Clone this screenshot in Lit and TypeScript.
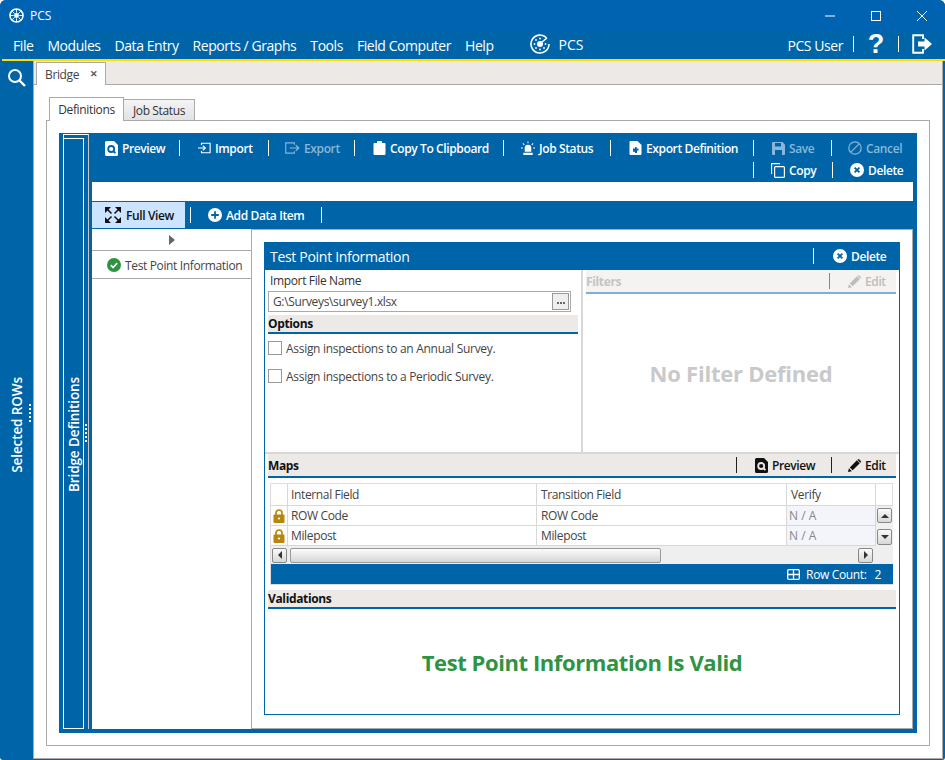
import { LitElement, html, css, svg } from "lit";
import { customElement } from "lit/decorators.js";

const ico = (w: number, h: number, vb: string, body: unknown) =>
  html`<svg class="ico" width=${w} height=${h} viewBox=${vb}>${body}</svg>`;

const I = {
  preview: () => ico(13, 15, "0 0 13 15", svg`<path d="M1.500 0H9l4 4v9.500a1.500 1.500 0 0 1-1.500 1.500h-10A1.500 1.500 0 0 1 0 13.500v-12A1.500 1.500 0 0 1 1.500 0z" fill="currentColor"/><circle cx="6.200" cy="8" r="3" fill="none" stroke="var(--hole)" stroke-width="1.800"/><path d="M8.200 10l2.200 2.200" stroke="var(--hole)" stroke-width="1.800"/>`),
  imp: () => ico(13, 14, "0 0 15 14", svg`<path d="M4 3.500V1.500h10v11H4v-2" fill="none" stroke="currentColor" stroke-width="1.300"/><path d="M0 7h8M5.500 4.300L8.500 7l-3 2.700" fill="none" stroke="currentColor" stroke-width="1.400"/>`),
  exp: () => ico(15, 14, "0 0 16 14", svg`<path d="M10 3.500V1.500H.8v11H10v-2" fill="none" stroke="currentColor" stroke-width="1.200"/><path d="M5 7h9M11.500 4l3.200 3-3.200 3" fill="none" stroke="currentColor" stroke-width="1.300"/>`),
  clip: () => ico(13, 14, "0 0 12 14", svg`<path d="M1 2h2.500V.8C3.500.3 4 0 4.500 0h3c.5 0 1 .3 1 .8V2H11a1 1 0 0 1 1 1v10a1 1 0 0 1-1 1H1a1 1 0 0 1-1-1V3a1 1 0 0 1 1-1z" fill="currentColor"/>`),
  beacon: () => ico(14, 15, "0 0 15 15", svg`<path d="M4 11V7a3.500 3.500 0 0 1 7 0v4zM2.500 12h10v2.500h-10z" fill="currentColor"/><path d="M7.500 0v2M2 2l1.500 1.500M13 2l-1.500 1.500M0 7h2M13 7h2" stroke="currentColor" stroke-width="1.100"/>`),
  expdef: () => ico(13, 14, "0 0 12 14", svg`<path d="M1 0h7l4 4v9a1 1 0 0 1-1 1H1a1 1 0 0 1-1-1V1a1 1 0 0 1 1-1z" fill="currentColor"/><path d="M3.500 7.500h2V6h1.600v1.500H9v2H7.500V12h-2v-1.200h-2z" fill="#0065a8"/>`),
  save: () => ico(13, 13, "0 0 13 13", svg`<path d="M1 0h9.500L13 2.500V12a1 1 0 0 1-1 1H1a1 1 0 0 1-1-1V1a1 1 0 0 1 1-1z" fill="currentColor"/><path d="M3 1h6v3.500H3zM3 8h7v5H3z" fill="#0065a8"/>`),
  cancel: () => ico(14, 14, "0 0 14 14", svg`<circle cx="7" cy="7" r="6.200" fill="none" stroke="currentColor" stroke-width="1.200"/><path d="M2.800 11.200l8.400-8.400" stroke="currentColor" stroke-width="1.200"/>`),
  copy: () => ico(14, 15, "0 0 14 15", svg`<path d="M.6 11V.6H9" fill="none" stroke="currentColor" stroke-width="1.100"/><rect x="3.600" y="3.600" width="9.800" height="10.800" rx="1" fill="none" stroke="currentColor" stroke-width="1.200"/>`),
  del: () => ico(14, 14, "0 0 14 14", svg`<circle cx="7" cy="7" r="7" fill="currentColor"/><path d="M4.600 4.600l4.800 4.800M9.400 4.600l-4.800 4.800" stroke="#0065a8" stroke-width="1.800"/>`),
  full: () => ico(16, 16, "0 0 16 16", svg`<g fill="#111"><path d="M0 0h6L0 6zM16 0h-6l6 6zM0 16h6l-6-6zM16 16h-6l6-6z"/></g><path d="M2 2l4.500 4.500M14 2L9.500 6.500M2 14l4.500-4.500M14 14L9.500 9.500" stroke="#111" stroke-width="1.500"/>`),
  add: () => ico(14, 14, "0 0 14 14", svg`<circle cx="7" cy="7" r="7" fill="currentColor"/><path d="M7 3.200v7.600M3.200 7h7.600" stroke="#0065a8" stroke-width="1.800"/>`),
  check: () => ico(14, 14, "0 0 14 14", svg`<circle cx="7" cy="7" r="7" fill="#2e9443"/><path d="M3.800 7.200l2.300 2.300 4.100-4.300" fill="none" stroke="#fff" stroke-width="1.700"/>`),
  pencil: () => ico(13, 13, "0 0 13 13", svg`<path d="M0 13l.9-3.700 3 2.900zM1.800 8.400L8.900 1.300l2.900 2.900-7.100 7.100zM9.700.5c.5-.5 1.200-.5 1.700 0l1.200 1.200c.5.5.5 1.200 0 1.700l-.3.3-2.900-2.900z" fill="currentColor"/>`),
  lock: () => ico(12, 14, "0 0 12 14", svg`<path d="M3 6V4a3 3 0 0 1 6 0v2" fill="none" stroke="#b8860b" stroke-width="1.700"/><rect x=".5" y="5.500" width="11" height="8.500" rx="1" fill="#b8860b"/><circle cx="6" cy="9.500" r="1.100" fill="#fff"/>`),
  grid: () => ico(13, 11, "0 0 13 11", svg`<rect x=".7" y=".7" width="11.600" height="9.600" rx="1" fill="none" stroke="currentColor" stroke-width="1.300"/><path d="M.7 5.500h11.600M6.500.7v9.600" stroke="currentColor" stroke-width="1.300"/>`),
};

type Btn = { icon: () => unknown; label: string; w: number; m?: number; off?: boolean; sep?: boolean };

const row1: Btn[] = [
  { icon: I.preview, label: "Preview", w: 74, m: 18 },
  { icon: I.imp, label: "Import", w: 70, m: 16 },
  { icon: I.exp, label: "Export", w: 69, m: 18, off: true },
  { icon: I.clip, label: "Copy To Clipboard", w: 130, m: 17 },
  { icon: I.beacon, label: "Job Status", w: 89, m: 18 },
  { icon: I.expdef, label: "Export Definition", w: 124, m: 18 },
  { icon: I.save, label: "Save", w: 59, m: 16, off: true },
  { icon: I.cancel, label: "Cancel", w: 60, off: true, sep: false },
];

const rows = [
  { field: "ROW Code", trans: "ROW Code" },
  { field: "Milepost", trans: "Milepost" },
];

@customElement("app-root")
export class AppRoot extends LitElement {
  static styles = css`
    :host {
      display: block;
      width: 945px;
      height: 760px;
      overflow: hidden;
      background: #fff;
      font-family: "Open Sans", "Noto Sans", sans-serif;
      font-size: 12px;
      letter-spacing: -0.36px;
      color: #333;
      --blue: #0065a8;
      --hole: #0065a8;
    }
    * { box-sizing: border-box; }
    .ico { display: block; flex: none; }
    .win {
      height: 760px;
      border-radius: 6px 6px 3px 3px;
      overflow: hidden;
      background: var(--blue);
      display: flex;
      flex-direction: column;
    }
    .title {
      height: 31px;
      background: #0063b1;
      color: #fff;
      display: flex;
      align-items: center;
      padding-left: 9px;
      flex: none;
    }
    .title .name { margin-left: 6px; letter-spacing: 0; }
    .winctl { margin-left: auto; display: flex; align-items: center; }
    .winctl svg { display: block; }
    .winctl .c { width: 46px; display: flex; justify-content: center; }
    .menu {
      height: 30px;
      flex: none;
      border-bottom: 2px solid #ffdd00;
      margin-left: 2px;
      color: #fff;
      font-size: 14px;
      letter-spacing: -0.44px;
      display: flex;
      align-items: center;
      padding-left: 11px;
    }
    .menu .m { margin-right: 14px; white-space: nowrap; }
    .brand { display: flex; align-items: center; gap: 9px; margin-left: 22px; font-size: 14px; margin-top: -2px; }
    .brand span { letter-spacing: 0; }
    .user { margin-left: auto; display: flex; align-items: center; padding-right: 13px; }
    .user .vs { width: 1px; height: 16px; background: #fff; }
    .user .vs, .user .q, .user svg { margin-top: -2px; }
    .q { font: 700 27px "Liberation Sans", sans-serif; width: 44px; text-align: center; letter-spacing: 0; line-height: 26px; }
    .body { flex: 1; display: flex; min-height: 0; }
    .side {
      width: 33px;
      flex: none;
      position: relative;
      color: #fff;
      display: flex;
      flex-direction: column;
      align-items: center;
      padding-top: 7px;
    }
    .vtext {
      writing-mode: vertical-rl;
      transform: rotate(180deg);
      white-space: nowrap;
      font-size: 13.500px;
      font-weight: 600;
      letter-spacing: -0.1px;
      color: #fff;
    }
    .side .vtext { margin-top: 289px; }
    .grip {
      position: absolute;
      width: 2px;
      background: repeating-linear-gradient(#fff 0 2px, transparent 2px 4px);
    }
    .side .grip { left: 29px; top: 343px; height: 18px; }
    .main {
      flex: 1;
      min-width: 0;
      margin: 0 2px 1px 0;
      background: #fff;
      border: 1px solid #aaa;
      border-top: 0;
      display: flex;
      flex-direction: column;
    }
    .docstrip {
      height: 24px;
      flex: none;
      background: #ece9e7;
      border-bottom: 1px solid #aaa;
      padding: 1px 0 0 2px;
    }
    .doctab {
      width: 70px;
      height: 23px;
      background: #fff;
      border: 1px solid #aaa;
      border-bottom: 0;
      display: flex;
      align-items: center;
      padding-left: 8px;
      color: #444;
    }
    .doctab b { margin-left: auto; margin-right: 7px; font-weight: 700; font-size: 9px; line-height: 12px; color: #555; }
    .pane { flex: 1; min-height: 0; padding: 12px; display: flex; flex-direction: column; }
    .tabs { display: flex; height: 24px; padding-left: 3px; align-items: flex-end; margin-bottom: -1px; position: relative; }
    .tab {
      width: 75px;
      height: 24px;
      background: #fff;
      border: 1px solid #aaa;
      border-bottom: 0;
      display: flex;
      align-items: center;
      justify-content: center;
      position: relative;
      z-index: 1;
    }
    .tab.off {
      width: 71px;
      height: 22px;
      border-left: 0;
      border-bottom: 1px solid #aaa;
      background: linear-gradient(#f4f4f4, #e2e2e2);
      z-index: 0;
    }
    .panel { flex: 1; min-height: 0; border: 1px solid #aaa; padding: 12px; display: flex; flex-direction: column; }
    .blue { flex: 1; min-height: 0; background: var(--blue); display: flex; padding-right: 4px; padding-bottom: 4px; }
    .strip { width: 33px; flex: none; padding: 1px 3px 0 4px; display: flex; position: relative; }
    .outer { flex: 1; border: 1px solid #fff; border-right-color: #c8c8c8; border-bottom: 0; padding-top: 3px; display: flex; }
    .inner { width: 21px; margin-left: -1px; border: 1px solid #fff; display: flex; flex-direction: column; align-items: center; }
    .inner .vtext { margin-top: 238px; }
    .strip .grip { left: 26px; top: 291px; height: 18px; }
    .work { flex: 1; min-width: 0; display: flex; flex-direction: column; color: #fff; }
    .tb1 { height: 49px; flex: none; margin-right: -4px; padding: 4px 0 0 13px; }
    .tbrow { display: flex; align-items: center; height: 22px; white-space: nowrap; }
    .tbrow.end { padding-left: 648px; }
    .btn { display: flex; align-items: center; gap: 4px; color: #fff; font-weight: 600; letter-spacing: -0.38px; flex: none; white-space: nowrap; }
    .btn.off { color: #8ab6d8; }
    .btn .lab { display: block; }
    .vs { width: 1px; height: 16px; background: #fff; flex: none; }
    .gapbar { height: 19px; background: #fff; flex: none; }
    .tb2 { height: 28px; flex: none; display: flex; align-items: flex-start; padding-top: 1px; }
    .fv {
      width: 93px;
      height: 26px;
      background: #cce4ff;
      color: #111;
      font-weight: 600;
      letter-spacing: -0.38px;
      display: flex;
      align-items: center;
      gap: 5px;
      padding-left: 13px;
    }
    .tb2 .vs { margin: 5px 0; }
    .tb2 .add { width: 130px; padding-left: 17px; height: 26px; }
    .split { flex: 1; min-height: 0; display: flex; background: #fff; color: #333; }
    .list { width: 159px; flex: none; }
    .expander { height: 22px; border-bottom: 1px solid #aaa; display: flex; align-items: center; justify-content: center; }
    .tri { width: 0; height: 0; border-left: 6px solid #666; border-top: 5px solid transparent; border-bottom: 5px solid transparent; }
    .item { height: 28px; border-bottom: 1px solid #aaa; display: flex; align-items: center; gap: 4px; padding: 1px 0 0 15px; white-space: nowrap; color: #444; }
    .right { flex: 1; min-width: 0; border: 1px solid #aaa; padding: 12px 12px 13px 12px; display: flex; }
    .card { flex: 1; min-width: 0; border: 1px solid var(--blue); display: flex; flex-direction: column; }
    .cardhead {
      height: 28px;
      margin: -1px -1px 0;
      background: var(--blue);
      color: #fff;
      display: flex;
      align-items: center;
      font-size: 14px;
      letter-spacing: -0.3px;
      padding-left: 6px;
      flex: none;
    }
    .cardhead .spacer, .sec .spacer { flex: 1; }
    .cardhead .btn { font-size: 12px; }
    .top { height: 184px; flex: none; display: flex; border-bottom: 2px solid #d8d8d8; }
    .left { width: 318px; flex: none; border-right: 2px solid #d8d8d8; padding: 0 3px; }
    .label { height: 21px; padding-left: 2px; display: flex; align-items: center; color: #333; }
    .input {
      width: 303px;
      height: 21px;
      border: 1px solid #aaa;
      display: flex;
      align-items: center;
      padding: 0 0 0 4px;
      color: #444;
    }
    .browse {
      margin-left: auto;
      margin-right: 1px;
      width: 17px;
      height: 17px;
      border: 1px solid #999;
      background: #eee;
      display: flex;
      align-items: center;
      justify-content: center;
      gap: 1px;
    }
    .browse i { width: 2px; height: 2px; background: #666; display: block; margin-top: 2px; }
    .sec {
      height: 19px;
      background: #ece9e7;
      border-bottom: 2px solid var(--blue);
      display: flex;
      align-items: center;
      font-weight: 700;
      color: #111;
      font-size: 12px;
      flex: none;
      --hole: #ece9e7;
    }
    .sec .btn { color: #111; }
    .sec .vs { background: #222; }
    .left .sec { margin-top: 3px; }
    .opts { padding-top: 7px; display: flex; flex-direction: column; gap: 14px; }
    .opt { display: flex; align-items: center; gap: 4px; height: 14px; color: #444; white-space: nowrap; letter-spacing: -0.29px; }
    .cb { width: 14px; height: 14px; border: 1px solid #999; background: #fff; flex: none; }
    .rightcol { flex: 1; min-width: 0; padding: 0 3px; display: flex; flex-direction: column; }
    .filt {
      height: 24px;
      background: #f4f3f1;
      border-bottom: 2px solid #7fb0d4;
      color: #c4c4c4;
      font-weight: 700;
      display: flex;
      align-items: center;
      flex: none;
    }
    .filt .vs { background: #888; }
    .filt .spacer { flex: 1; }
    .filt .btn { color: #bdbdbd; }
    .nofilter { flex: 1; display: flex; align-items: center; justify-content: center; font-size: 22px; font-weight: 700; color: #c9c9c9; letter-spacing: -0.24px; }
    .bottom { flex: 1; min-height: 0; padding: 0 3px; display: flex; flex-direction: column; }
    .mapshead { height: 24px; }
    .grid {
      flex: none;
      margin: 5px 3px 0 2px;
      height: 102px;
      border: 1px solid #ddd;
      display: grid;
      grid-template-columns: 17px 249px 250px 89px 17px;
      grid-template-rows: 22px 20px 20px 18px 20px;
      background: #fff;
    }
    .cell { border-right: 1px solid #d8d8d8; border-bottom: 1px solid #d8d8d8; display: flex; align-items: center; padding-left: 3px; color: #444; white-space: nowrap; }
    .cell.wide { padding-left: 4px; }
    .cell.lk { padding-left: 2px; }
    .cell.ver { background: #f3f5fb; color: #888; padding-left: 2px; font-weight: 500; letter-spacing: 0; }
    .cell.end { border-right: 0; }
    .vscroll { grid-column: 5; grid-row: 2 / span 2; background: #f0f0f0; display: flex; flex-direction: column; gap: 6px; padding: 2px 0 0 1px; }
    .hscroll { grid-column: 1 / -1; background: #efefef; display: flex; align-items: center; padding: 0 0 0 1px; }
    .sbtn {
      width: 15px;
      height: 15px;
      border: 1px solid #888;
      border-radius: 2px;
      background: linear-gradient(#fafafa, #d8d8d8);
      display: flex;
      align-items: center;
      justify-content: center;
      flex: none;
    }
    .sbtn.tall { height: 16px; }
    .t-l, .t-r, .t-u, .t-d { width: 0; height: 0; border: 4px solid transparent; }
    .t-l { border-right-color: #333; border-left-width: 0; }
    .t-r { border-left-color: #333; border-right-width: 0; }
    .t-u { border-bottom-color: #333; border-top-width: 0; }
    .t-d { border-top-color: #333; border-bottom-width: 0; }
    .thumb { width: 371px; height: 15px; margin-left: 3px; border: 1px solid #999; border-radius: 2px; background: linear-gradient(#fbfbfb, #d6d6d6); }
    .hscroll .sbtn.r { margin-left: 197px; }
    .bar {
      grid-column: 1 / -1;
      background: var(--blue);
      color: #fff;
      display: flex;
      align-items: center;
      justify-content: flex-end;
      gap: 6px;
      padding-right: 12px;
    }
    .bar .n { margin-left: 2px; }
    .bottom > .sec.val { margin-top: 5px; }
    .valid { flex: 1; display: flex; align-items: center; justify-content: center; font-size: 22px; font-weight: 700; color: #2e9443; letter-spacing: -0.42px; }
  `;

  private btn(b: Btn) {
    return html`<div class="btn ${b.off ? "off" : ""}" style="width:${b.w}px">${b.icon()}<span class="lab">${b.label}</span></div>`;
  }

  render() {
    return html`
      <div class="win">
        <div class="title">
          <svg class="ico" width="15" height="15" viewBox="0 0 16 16">
            <circle cx="8" cy="8" r="7" fill="none" stroke="#fff" stroke-width="1.600"/>
            <circle cx="8" cy="8" r="2.600" fill="#fff"/>
            <path d="M8 1v4M8 11v4M1 8h4M11 8h4M3 3l3 3M10 10l3 3M13 3l-3 3M6 10l-3 3" stroke="#fff" stroke-width="1"/>
          </svg>
          <span class="name">PCS</span>
          <div class="winctl">
            <div class="c"><svg width="10" height="10" viewBox="0 0 10 10"><path d="M0 5h10" stroke="#fff"/></svg></div>
            <div class="c"><svg width="10" height="10" viewBox="0 0 10 10"><rect x=".5" y=".5" width="9" height="9" fill="none" stroke="#fff"/></svg></div>
            <div class="c"><svg width="10" height="10" viewBox="0 0 10 10"><path d="M0 0l10 10M10 0L0 10" stroke="#fff"/></svg></div>
          </div>
        </div>
        <div class="menu">
          ${["File", "Modules", "Data Entry", "Reports / Graphs", "Tools", "Field Computer", "Help"].map(m => html`<span class="m">${m}</span>`)}
          <div class="brand">
            <svg class="ico" width="20" height="20" viewBox="0 0 20 20">
              <path d="M16.500 3.800A9 9 0 1 0 19 10" fill="none" stroke="#fff" stroke-width="1.600"/>
              <circle cx="10" cy="10" r="3" fill="#fff"/>
              <path d="M12 8l5-4" stroke="#fff" stroke-width="1.600"/>
              <g fill="#fff"><circle cx="10" cy="4.500" r=".9"/><circle cx="10" cy="15.500" r=".9"/><circle cx="4.500" cy="10" r=".9"/><circle cx="15.500" cy="10" r=".9"/><circle cx="6" cy="6" r=".9"/><circle cx="6" cy="14" r=".9"/><circle cx="14" cy="14" r=".9"/></g>
            </svg>
            <span>PCS</span>
          </div>
          <div class="user">
            <span style="margin-right:10px">PCS User</span>
            <div class="vs"></div>
            <div class="q">?</div>
            <div class="vs"></div>
            <svg class="ico" style="margin-left:13px" width="20" height="20" viewBox="0 0 20 20">
              <path d="M11 5V1.200H1.200v17.600H11V15" fill="none" stroke="#fff" stroke-width="1.900"/>
              <path d="M6 7.500h6.500V3.500L20 10l-7.500 6.500v-4H6z" fill="#fff"/>
            </svg>
          </div>
        </div>
        <div class="body">
          <div class="side">
            <svg class="ico" width="20" height="20" viewBox="0 0 20 20">
              <circle cx="8" cy="8" r="6" fill="none" stroke="#fff" stroke-width="2"/>
              <path d="M12.500 12.500L18 18" stroke="#fff" stroke-width="2.400"/>
            </svg>
            <div class="vtext">Selected ROWs</div>
            <div class="grip"></div>
          </div>
          <div class="main">
            <div class="docstrip">
              <div class="doctab">Bridge<b>✕</b></div>
            </div>
            <div class="pane">
              <div class="tabs">
                <div class="tab">Definitions</div>
                <div class="tab off">Job Status</div>
              </div>
              <div class="panel">
                <div class="blue">
                  <div class="strip">
                    <div class="outer"><div class="inner"><div class="vtext">Bridge Definitions</div></div></div>
                    <div class="grip"></div>
                  </div>
                  <div class="work">
                    <div class="tb1">
                      <div class="tbrow">
                        ${row1.map(b => html`${this.btn(b)}${b.sep === false ? "" : html`<div class="vs" style="margin-right:${b.m}px"></div>`}`)}
                      </div>
                      <div class="tbrow end">
                        <div class="vs" style="margin-right:17px"></div>
                        ${this.btn({ icon: I.copy, label: "Copy", w: 61 })}
                        <div class="vs" style="margin-right:17px"></div>
                        ${this.btn({ icon: I.del, label: "Delete", w: 60 })}
                      </div>
                    </div>
                    <div class="gapbar"></div>
                    <div class="tb2">
                      <div class="fv">${I.full()}<span>Full View</span></div>
                      <div class="vs" style="margin-left:5px"></div>
                      <div class="btn add">${I.add()}<span>Add Data Item</span></div>
                      <div class="vs"></div>
                    </div>
                    <div class="split">
                      <div class="list">
                        <div class="expander"><div class="tri"></div></div>
                        <div class="item">${I.check()}<span>Test Point Information</span></div>
                      </div>
                      <div class="right">
                        <div class="card">
                          <div class="cardhead">
                            <span>Test Point Information</span>
                            <div class="spacer"></div>
                            <div class="vs"></div>
                            <div class="btn" style="width:86px;padding-left:19px">${I.del()}<span>Delete</span></div>
                          </div>
                          <div class="top">
                            <div class="left">
                              <div class="label">Import File Name</div>
                              <div class="input">
                                <span>G:\\Surveys\\survey1.xlsx</span>
                                <div class="browse"><i></i><i></i><i></i></div>
                              </div>
                              <div class="sec">Options</div>
                              <div class="opts">
                                <div class="opt"><div class="cb"></div><span>Assign inspections to an Annual Survey.</span></div>
                                <div class="opt"><div class="cb"></div><span>Assign inspections to a Periodic Survey.</span></div>
                              </div>
                            </div>
                            <div class="rightcol">
                              <div class="filt">
                                <span>Filters</span>
                                <div class="spacer"></div>
                                <div class="vs"></div>
                                <div class="btn" style="width:66px;padding-left:18px">${I.pencil()}<span>Edit</span></div>
                              </div>
                              <div class="nofilter">No Filter Defined</div>
                            </div>
                          </div>
                          <div class="bottom">
                            <div class="sec mapshead">
                              <span>Maps</span>
                              <div class="spacer"></div>
                              <div class="vs"></div>
                              <div class="btn" style="width:94px;padding-left:18px">${I.preview()}<span>Preview</span></div>
                              <div class="vs"></div>
                              <div class="btn" style="width:64px;padding-left:16px">${I.pencil()}<span>Edit</span></div>
                            </div>
                            <div class="grid">
                              <div class="cell"></div>
                              <div class="cell">Internal Field</div>
                              <div class="cell wide">Transition Field</div>
                              <div class="cell wide">Verify</div>
                              <div class="cell end"></div>
                              ${rows.map((r, i) => html`
                                <div class="cell lk" style="grid-row:${i + 2};grid-column:1">${I.lock()}</div>
                                <div class="cell" style="grid-row:${i + 2};grid-column:2">${r.field}</div>
                                <div class="cell wide" style="grid-row:${i + 2};grid-column:3">${r.trans}</div>
                                <div class="cell ver" style="grid-row:${i + 2};grid-column:4">N / A</div>
                              `)}
                              <div class="vscroll">
                                <div class="sbtn"><div class="t-u"></div></div>
                                <div class="sbtn tall"><div class="t-d"></div></div>
                              </div>
                              <div class="hscroll" style="grid-row:4">
                                <div class="sbtn"><div class="t-l"></div></div>
                                <div class="thumb"></div>
                                <div class="sbtn r"><div class="t-r"></div></div>
                              </div>
                              <div class="bar" style="grid-row:5">
                                ${I.grid()}
                                <span>Row Count:</span><span class="n">2</span>
                              </div>
                            </div>
                            <div class="sec val">Validations</div>
                            <div class="valid">Test Point Information Is Valid</div>
                          </div>
                        </div>
                      </div>
                    </div>
                  </div>
                </div>
              </div>
            </div>
          </div>
        </div>
      </div>
    `;
  }
}
